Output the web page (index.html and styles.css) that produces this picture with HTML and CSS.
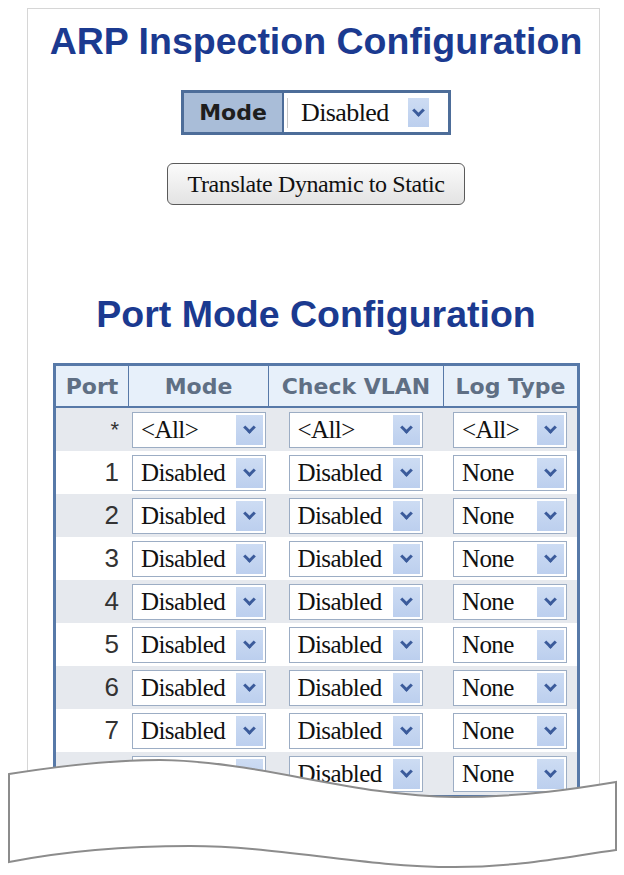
FILE: index.html
```html
<!DOCTYPE html>
<html lang="en">
<head>
  <meta charset="UTF-8">
  <meta name="viewport" content="width=device-width, initial-scale=1.0">
  <title>ARP Inspection Configuration</title>
  <link rel="stylesheet" href="styles.css">
</head>
<body>

  <div class="page">
    <h1>ARP Inspection Configuration</h1>

    <table class="mode-table">
      <tr>
        <td class="mode-label">Mode</td>
        <td class="mode-value">
          <div class="sel sel-top"><span>Disabled</span><i class="arrow"></i></div>
        </td>
      </tr>
    </table>

    <div class="btn-row">
      <button>Translate Dynamic to Static</button>
    </div>

    <h2>Port Mode Configuration</h2>

    <table class="ports">
      <thead>
        <tr>
          <th class="c-port">Port</th>
          <th class="c-mode">Mode</th>
          <th class="c-vlan">Check VLAN</th>
          <th class="c-log">Log Type</th>
        </tr>
      </thead>
      <tbody>
        <tr>
          <td class="port star">*</td>
          <td><div class="sel sel-mode"><span>&lt;All&gt;</span><i class="arrow"></i></div></td>
          <td><div class="sel sel-vlan"><span>&lt;All&gt;</span><i class="arrow"></i></div></td>
          <td><div class="sel sel-log"><span>&lt;All&gt;</span><i class="arrow"></i></div></td>
        </tr>
        <tr>
          <td class="port">1</td>
          <td><div class="sel sel-mode"><span>Disabled</span><i class="arrow"></i></div></td>
          <td><div class="sel sel-vlan"><span>Disabled</span><i class="arrow"></i></div></td>
          <td><div class="sel sel-log"><span>None</span><i class="arrow"></i></div></td>
        </tr>
        <tr>
          <td class="port">2</td>
          <td><div class="sel sel-mode"><span>Disabled</span><i class="arrow"></i></div></td>
          <td><div class="sel sel-vlan"><span>Disabled</span><i class="arrow"></i></div></td>
          <td><div class="sel sel-log"><span>None</span><i class="arrow"></i></div></td>
        </tr>
        <tr>
          <td class="port">3</td>
          <td><div class="sel sel-mode"><span>Disabled</span><i class="arrow"></i></div></td>
          <td><div class="sel sel-vlan"><span>Disabled</span><i class="arrow"></i></div></td>
          <td><div class="sel sel-log"><span>None</span><i class="arrow"></i></div></td>
        </tr>
        <tr>
          <td class="port">4</td>
          <td><div class="sel sel-mode"><span>Disabled</span><i class="arrow"></i></div></td>
          <td><div class="sel sel-vlan"><span>Disabled</span><i class="arrow"></i></div></td>
          <td><div class="sel sel-log"><span>None</span><i class="arrow"></i></div></td>
        </tr>
        <tr>
          <td class="port">5</td>
          <td><div class="sel sel-mode"><span>Disabled</span><i class="arrow"></i></div></td>
          <td><div class="sel sel-vlan"><span>Disabled</span><i class="arrow"></i></div></td>
          <td><div class="sel sel-log"><span>None</span><i class="arrow"></i></div></td>
        </tr>
        <tr>
          <td class="port">6</td>
          <td><div class="sel sel-mode"><span>Disabled</span><i class="arrow"></i></div></td>
          <td><div class="sel sel-vlan"><span>Disabled</span><i class="arrow"></i></div></td>
          <td><div class="sel sel-log"><span>None</span><i class="arrow"></i></div></td>
        </tr>
        <tr>
          <td class="port">7</td>
          <td><div class="sel sel-mode"><span>Disabled</span><i class="arrow"></i></div></td>
          <td><div class="sel sel-vlan"><span>Disabled</span><i class="arrow"></i></div></td>
          <td><div class="sel sel-log"><span>None</span><i class="arrow"></i></div></td>
        </tr>
        <tr>
          <td class="port">8</td>
          <td><div class="sel sel-mode"><span>Disabled</span><i class="arrow"></i></div></td>
          <td><div class="sel sel-vlan"><span>Disabled</span><i class="arrow"></i></div></td>
          <td><div class="sel sel-log"><span>None</span><i class="arrow"></i></div></td>
        </tr>
      </tbody>
    </table>
  </div>

  <!-- torn paper edge over the bottom of the table -->
  <svg class="torn" width="624" height="135" viewBox="0 0 624 135">
    <path d="M9,34 C60,26 110,20 160,20 C260,21 350,56 455,57 C525,57 580,48 616,42
             L616,110 C570,116 520,127 455,127 C360,127 280,106 190,106 C110,106 50,114 9,122 Z"
          fill="#fff" stroke="#8c8c8c" stroke-width="2"/>
  </svg>

</body>
</html>
```

FILE: styles.css
```css
body {
  margin: 0;
  background: #fff;
  font-family: 'Liberation Sans', Arial, sans-serif;
  color: #222;
}
.page {
  margin: 8px 0 0 27px;
  width: 566px;
  height: 795px;
  padding-left: 5px;
  border: 1px solid #d6d6d6;
  overflow: hidden;
}
h1,
h2 {
  font: bold 37.5px/43px 'Liberation Sans', Arial, sans-serif;
  color: #1b3a90;
  text-align: center;
  margin: 0;
}
h1 {
  margin-top: 11px;
}
h2 {
  margin-top: 88px;
}

/* top mode box */
.mode-table {
  margin: 27px auto 0;
  border: 3px solid #4d6d99;
  border-spacing: 0;
}
.mode-table td {
  padding: 0;
  height: 39px;
}
.mode-label {
  width: 98px;
  background: #a9bdd8;
  border-right: 2px solid #4d6d99;
  text-align: center;
  font: bold 22px 'DejaVu Sans', Verdana, sans-serif;
  color: #1e1e1e;
}
.mode-value {
  width: 161px;
  padding-left: 3px !important;
  background: #fff;
}

/* fake select boxes */
.sel {
  display: flex;
  align-items: center;
  box-sizing: border-box;
  height: 36px;
  padding: 2px;
  background: #fff;
  border: 1px solid #9cadc4;
  margin: 0 auto;
  font: 25px 'Liberation Serif', 'Times New Roman', serif;
  letter-spacing: -0.6px;
  color: #111;
  text-align: left;
}
.sel span {
  padding-left: 6px;
  white-space: nowrap;
}
.arrow {
  margin-left: auto;
  width: 27px;
  height: 30px;
  background: linear-gradient(#cddcf3, #bccfee);
  display: flex;
  align-items: center;
  justify-content: center;
}
.arrow::after {
  content: '';
  width: 6px;
  height: 6px;
  border-right: 3px solid #3b5b9b;
  border-bottom: 3px solid #3b5b9b;
  transform: rotate(45deg);
  margin-top: -5px;
}
.sel-top {
  width: 152px;
  height: 30px;
  margin: 0;
  border: none;
  border-left: 1px solid #c8c8c8;
  padding: 0 10px 0 0;
  font-size: 26px;
}
.sel-top span {
  padding-left: 13px;
}
.sel-top .arrow {
  width: 21px;
  height: 29px;
}
.sel-mode,
.sel-vlan {
  width: 134px;
}
.sel-log {
  width: 114px;
}

.btn-row {
  text-align: center;
  margin-top: 28px;
}
button {
  width: 298px;
  height: 42px;
  border: 1px solid #5a5a5a;
  border-radius: 6px;
  background: linear-gradient(#fbfbfb, #e3e3e3);
  font: 24px 'Liberation Serif', 'Times New Roman', serif;
  letter-spacing: -0.4px;
  color: #111;
  padding: 0;
}

/* port table */
.ports {
  margin: 27px 0 0 20px;
  width: 527px;
  table-layout: fixed;
  border: 3px solid #5779a8;
  border-spacing: 0;
}
.ports th,
.ports td {
  box-sizing: border-box;
  padding: 0;
}
.ports th {
  height: 42px;
  background: #e7f0fa;
  color: #5f6f84;
  font: bold 22px 'DejaVu Sans', Verdana, sans-serif;
  border-bottom: 2px solid #5779a8;
  text-align: center;
  white-space: nowrap;
}
.ports th + th {
  border-left: 1px solid #5779a8;
}
.c-port { width: 72px; }
.c-mode { width: 140px; }
.c-vlan { width: 175px; }
.c-log { width: 134px; }
.ports td {
  height: 43px;
  text-align: center;
}
.ports tbody tr:nth-child(odd) {
  background: #e6e9ee;
}
.ports td.port {
  text-align: right;
  padding-right: 9px;
  font-size: 26px;
  color: #333;
}
.ports td.star {
  font-size: 22px;
  vertical-align: middle;
}
.ports .sel-mode {
  margin: 0 2px 0 4px;
}

.torn {
  position: absolute;
  left: 0;
  top: 740px;
}
```
